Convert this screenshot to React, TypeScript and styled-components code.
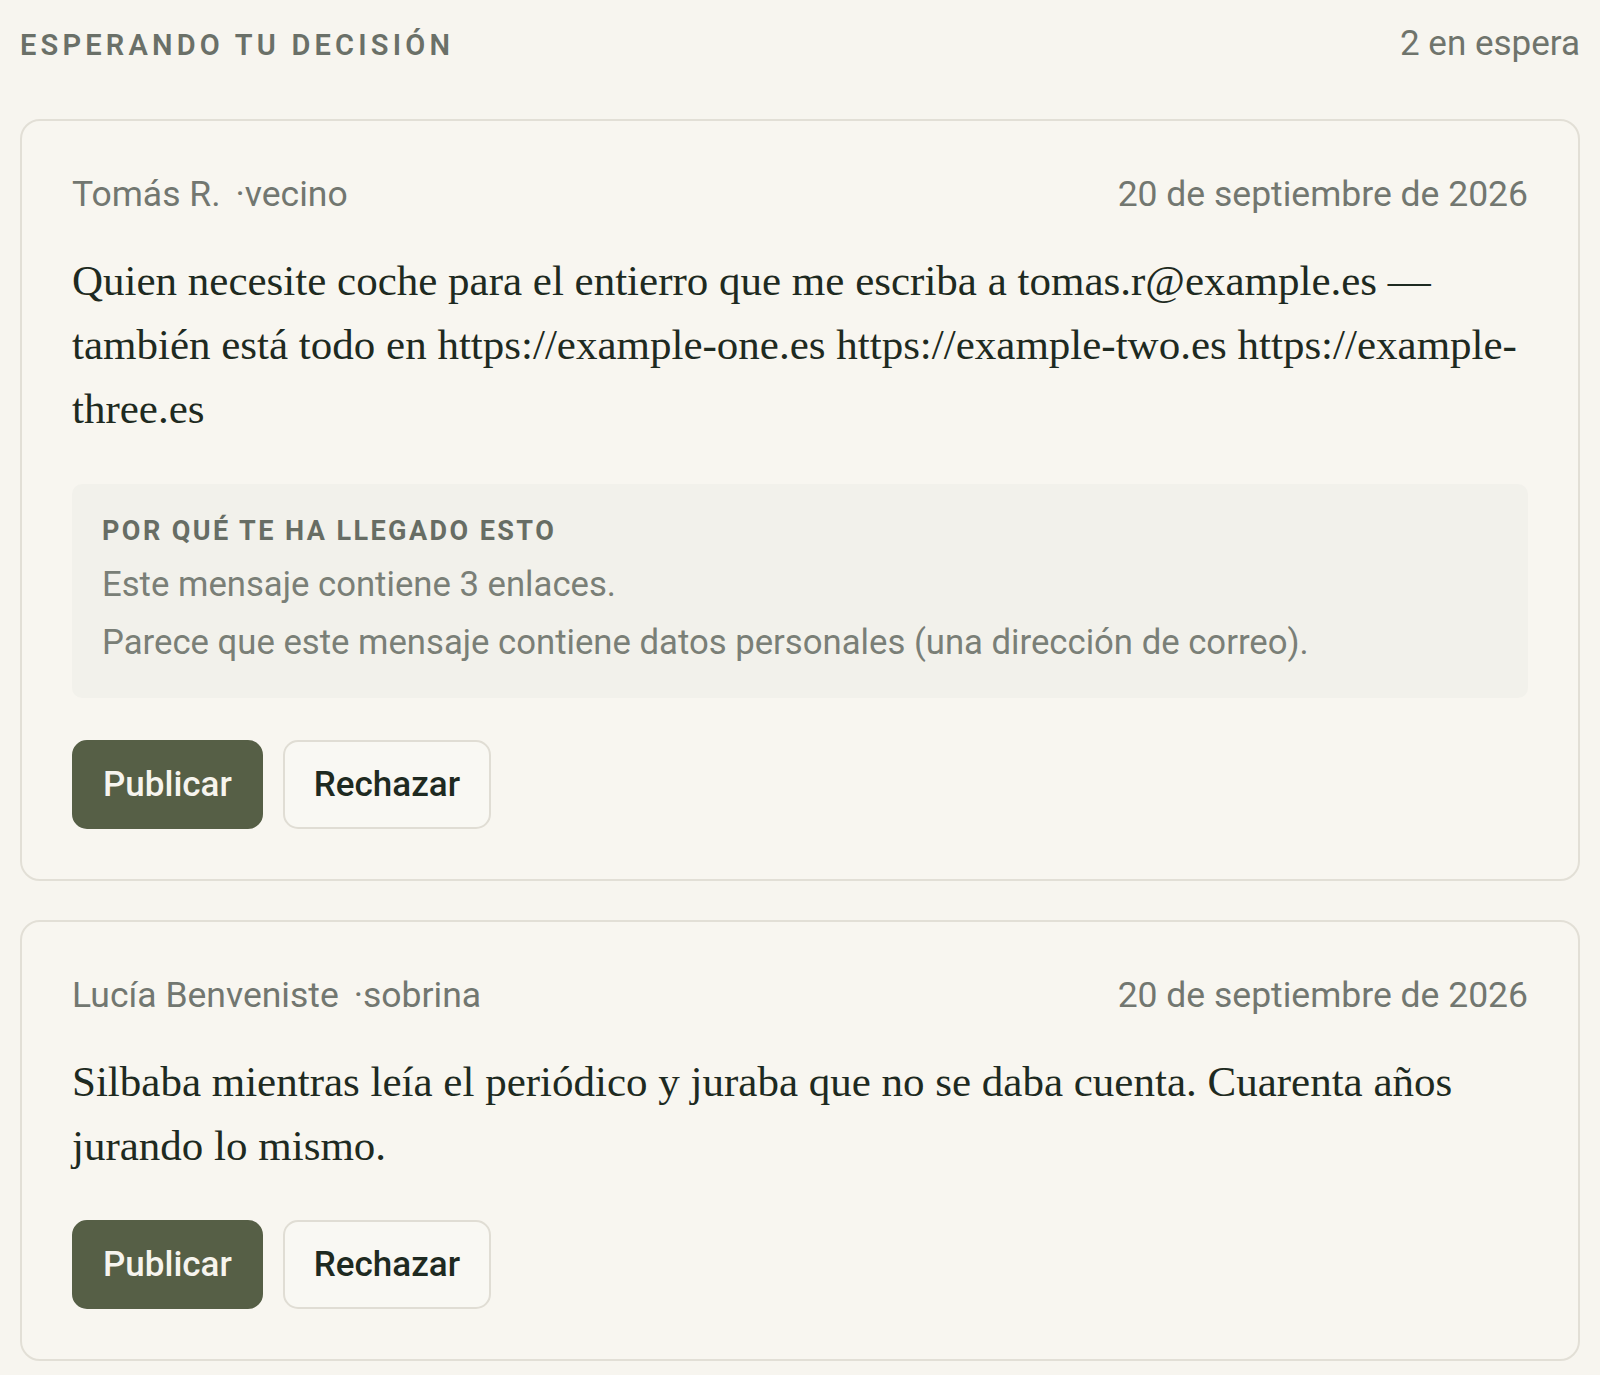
import React from "react";
import styled, { createGlobalStyle } from "styled-components";

const Global = createGlobalStyle`
  html, body {
    margin: 0;
    padding: 0;
    background: #f7f5ef;
  }
  body {
    font-family: Roboto, "Noto Sans", "Liberation Sans", sans-serif;
    color: #1e2a21;
  }
  * { box-sizing: border-box; }
`;

const Page = styled.main`
  padding: 24px 20px 15px;
`;

const Header = styled.header`
  display: flex;
  justify-content: space-between;
  align-items: baseline;
  line-height: 40px;
`;

const Title = styled.h2`
  margin: 0;
  font-size: 29px;
  font-weight: 600;
  letter-spacing: 0.145em;
  text-transform: uppercase;
  color: #6a7068;
`;

const Count = styled.span`
  font-size: 35px;
  color: #6f746c;
`;

const List = styled.div`
  display: flex;
  flex-direction: column;
  gap: 39px;
  margin-top: 54px;
`;

const Card = styled.article`
  border: 2px solid #e2dfd6;
  border-radius: 20px;
  padding: 50px;
  background: #f8f6f0;
`;

const Meta = styled.div`
  display: flex;
  justify-content: space-between;
  align-items: baseline;
  font-size: 35.5px;
  line-height: 46px;
  color: #727770;
`;

const Author = styled.div`
  display: flex;
  gap: 15px;
`;

const Body = styled.p`
  margin: 32px 0 0;
  font-family: "Liberation Serif", "DejaVu Serif", serif;
  font-size: 43px;
  line-height: 64px;
  color: #1e2a21;
`;

const Reason = styled.section`
  margin-top: 43px;
  padding: 31px 30px 32px;
  border-radius: 10px;
  background: #f2f1eb;
`;

const ReasonLabel = styled.div`
  font-size: 27px;
  font-weight: 700;
  letter-spacing: 0.09em;
  line-height: 32px;
  text-transform: uppercase;
  color: #676d64;
`;

const ReasonLine = styled.p`
  margin: 0;
  font-size: 34.7px;
  line-height: 48px;
  color: #7a7f77;
  & + & { margin-top: 10px; }
  ${ReasonLabel} + & { margin-top: 13px; }
`;

const Actions = styled.div`
  display: flex;
  gap: 20px;
  margin-top: 42px;
`;

const Button = styled.button<{ $primary?: boolean }>`
  font-family: Roboto, "Noto Sans", sans-serif;
  font-size: 35px;
  font-weight: 500;
  line-height: 41px;
  padding: 22px 29px;
  border-radius: 15px;
  cursor: pointer;
  border: 2px solid ${(p) => (p.$primary ? "#565f46" : "#e0ddd4")};
  background: ${(p) => (p.$primary ? "#565f46" : "#f9f8f3")};
  color: ${(p) => (p.$primary ? "#f6f4ee" : "#1e2a21")};
`;

type Item = {
  name: string;
  relation: string;
  date: string;
  text: string;
  reasons?: string[];
};

const items: Item[] = [
  {
    name: "Tomás R.",
    relation: "vecino",
    date: "20 de septiembre de 2026",
    text:
      "Quien necesite coche para el entierro que me escriba a tomas.r@example.es — también está todo en https://example-one.es https://example-two.es https://example-three.es",
    reasons: [
      "Este mensaje contiene 3 enlaces.",
      "Parece que este mensaje contiene datos personales (una dirección de correo).",
    ],
  },
  {
    name: "Lucía Benveniste",
    relation: "sobrina",
    date: "20 de septiembre de 2026",
    text:
      "Silbaba mientras leía el periódico y juraba que no se daba cuenta. Cuarenta años jurando lo mismo.",
  },
];

export default function App() {
  return (
    <>
      <Global />
      <Page>
        <Header>
          <Title>Esperando tu decisión</Title>
          <Count>2 en espera</Count>
        </Header>
        <List>
          {items.map((it) => (
            <Card key={it.name}>
              <Meta>
                <Author>
                  <span>{it.name}</span>
                  <span>·{it.relation}</span>
                </Author>
                <span>{it.date}</span>
              </Meta>
              <Body>{it.text}</Body>
              {it.reasons && (
                <Reason>
                  <ReasonLabel>Por qué te ha llegado esto</ReasonLabel>
                  {it.reasons.map((r) => (
                    <ReasonLine key={r}>{r}</ReasonLine>
                  ))}
                </Reason>
              )}
              <Actions>
                <Button $primary>Publicar</Button>
                <Button>Rechazar</Button>
              </Actions>
            </Card>
          ))}
        </List>
      </Page>
    </>
  );
}
